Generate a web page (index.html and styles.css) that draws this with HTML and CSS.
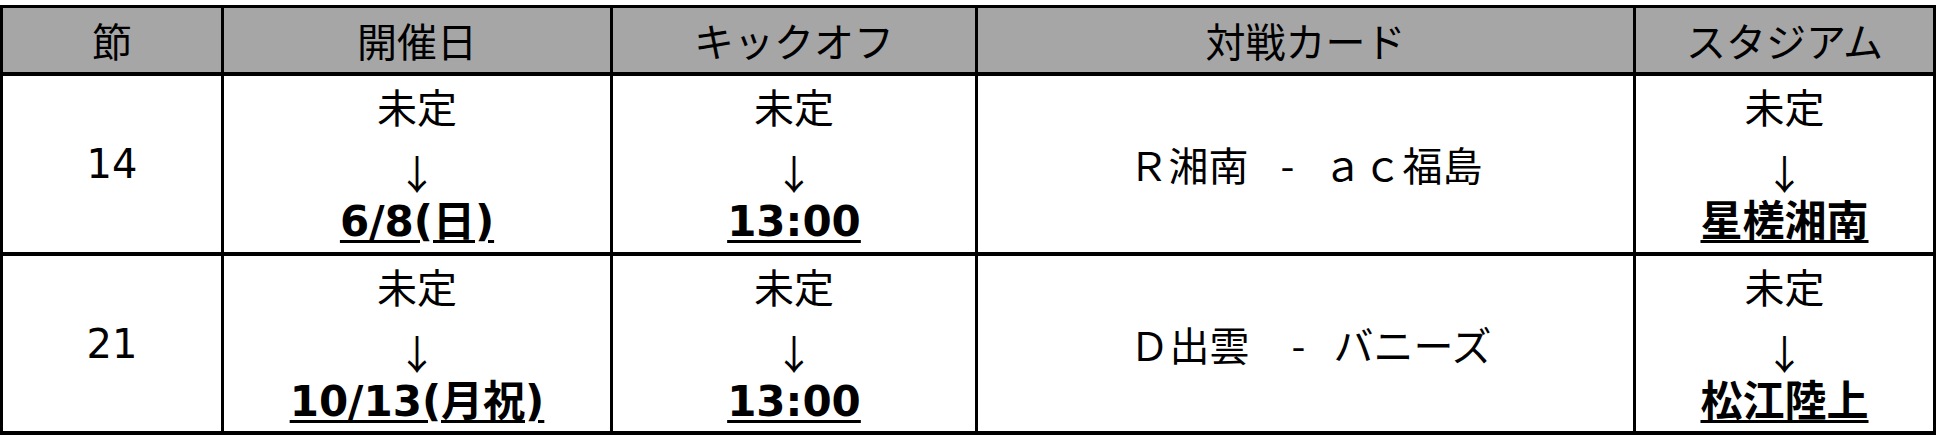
FILE: index.html
```html
<!DOCTYPE html>
<html lang="ja">
<head>
<meta charset="utf-8">
<title>日程</title>
<link rel="stylesheet" href="styles.css">
</head>
<body>
<div class="schedule">
  <div class="cell head">節</div>
  <div class="cell head">開催日</div>
  <div class="cell head">キックオフ</div>
  <div class="cell head">対戦カード</div>
  <div class="cell head">スタジアム</div>

  <div class="cell">14</div>
  <div class="cell stack"><span>未定</span><span class="arrow">↓</span><span class="new">6/8(日)</span></div>
  <div class="cell stack"><span>未定</span><span class="arrow">↓</span><span class="new">13:00</span></div>
  <div class="cell match">Ｒ湘南<span class="sep">-</span>ａｃ福島</div>
  <div class="cell stack"><span>未定</span><span class="arrow">↓</span><span class="new">星槎湘南</span></div>

  <div class="cell">21</div>
  <div class="cell stack"><span>未定</span><span class="arrow">↓</span><span class="new">10/13(月祝)</span></div>
  <div class="cell stack"><span>未定</span><span class="arrow">↓</span><span class="new">13:00</span></div>
  <div class="cell match match-alt">Ｄ出雲<span class="sep">-</span>バニーズ</div>
  <div class="cell stack"><span>未定</span><span class="arrow">↓</span><span class="new">松江陸上</span></div>
</div>
</body>
</html>
```

FILE: styles.css
```css
html, body {
  margin: 0;
  padding: 0;
  background: #ffffff;
}

body {
  padding-top: 5px;
  font-family: "DejaVu Sans", "Noto Sans CJK JP", sans-serif;
  font-size: 40px;
  color: #000000;
}

.schedule {
  display: grid;
  grid-template-columns: 218px 386px 362px 655px 297px;
  grid-template-rows: 64px 176px 175px;
  column-gap: 3px;
  row-gap: 4px;
  padding: 3px 3px 4px 3px;
  width: 1936px;
  box-sizing: border-box;
  background: #000000;
}

.cell {
  background: #ffffff;
  display: flex;
  align-items: center;
  justify-content: center;
  line-height: 1;
}

.head {
  background: #a6a6a6;
  font-family: "Noto Sans CJK JP", sans-serif;
}

.stack {
  flex-direction: column;
  line-height: 58px;
}

.stack span {
  display: block;
}

.stack span:first-child {
  font-family: "Noto Sans CJK JP", sans-serif;
}

.arrow {
  font-family: "Noto Sans CJK JP", sans-serif;
  padding-top: 8px;
  height: 50px;
  box-sizing: content-box;
}

.new {
  font-size: 42px;
  font-weight: bold;
  text-decoration: underline;
  text-decoration-thickness: 3px;
  text-underline-offset: 4px;
}

.match {
  font-family: "Noto Sans CJK JP", sans-serif;
}

.sep {
  margin: 0 28px 0 32px;
}

.match-alt {
  padding-left: 10px;
}

.match-alt .sep {
  margin: 0 28px 0 42px;
}
```
